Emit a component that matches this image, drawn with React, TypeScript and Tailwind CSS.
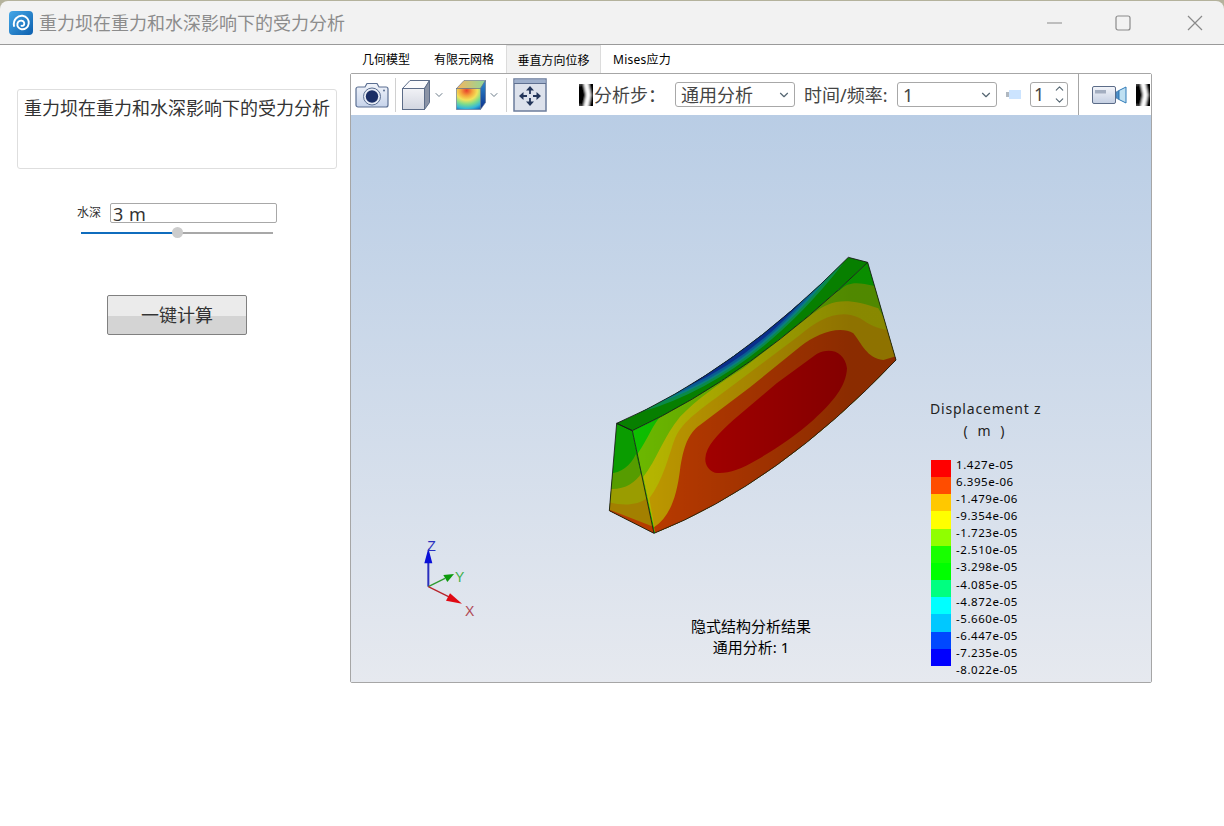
import { ChevronDown, ChevronUp } from "lucide-react";

const legendColors = [
  "bg-[#ff0000]",
  "bg-[#ff4d00]",
  "bg-[#ffc800]",
  "bg-[#ffff00]",
  "bg-[#90ff00]",
  "bg-[#18ff00]",
  "bg-[#00ff00]",
  "bg-[#00ff80]",
  "bg-[#00ffff]",
  "bg-[#00c8ff]",
  "bg-[#0048ff]",
  "bg-[#0000ff]",
];

const legendLabels = [
  "1.427e-05",
  "6.395e-06",
  "-1.479e-06",
  "-9.354e-06",
  "-1.723e-05",
  "-2.510e-05",
  "-3.298e-05",
  "-4.085e-05",
  "-4.872e-05",
  "-5.660e-05",
  "-6.447e-05",
  "-7.235e-05",
  "-8.022e-05",
];

const tabs = ["几何模型", "有限元网格", "垂直方向位移", "Mises应力"];

function Logo() {
  return (
    <svg width="24" height="24" viewBox="0 0 24 24">
      <defs>
        <linearGradient id="logoBg" x1="0" y1="0" x2="1" y2="1">
          <stop offset="0" stopColor="#45a8e8" />
          <stop offset="1" stopColor="#0c5fae" />
        </linearGradient>
      </defs>
      <rect width="24" height="24" rx="4" fill="url(#logoBg)" />
      <path
        d="M5 15C3.800 8.500 9 4.300 13.500 4.800c4.200.5 6.800 4 6.200 7.800-.5 3.600-3.700 6.200-7.200 5.600-2.700-.4-4.600-2.900-4.100-5.400.4-2.100 2.400-3.500 4.400-3.100 1.700.3 2.800 2 2.400 3.500-.3 1.300-1.500 2-2.700 1.600"
        fill="none"
        stroke="#fff"
        strokeWidth="1.900"
        strokeLinecap="round"
      />
    </svg>
  );
}

function CameraIcon() {
  return (
    <svg width="34" height="28" viewBox="0 0 34 28">
      <defs>
        <linearGradient id="camBody" x1="0" y1="0" x2="0" y2="1">
          <stop offset="0" stopColor="#f2f5fb" />
          <stop offset="1" stopColor="#c6d3ea" />
        </linearGradient>
      </defs>
      <path
        d="M3 6h7l2-3.500h10l2 3.500h7c1 0 2 1 2 2v16c0 1-1 2-2 2H3c-1 0-2-1-2-2V8c0-1 1-2 2-2z"
        fill="url(#camBody)"
        stroke="#5b6f92"
        strokeWidth="1.200"
      />
      <circle cx="17" cy="15.500" r="8.500" fill="#e8edf6" stroke="#5b6f92" />
      <circle cx="17" cy="15.500" r="6.200" fill="#1b2f66" />
      <circle cx="29" cy="9.500" r="1" fill="#5b6f92" />
    </svg>
  );
}

function PlainCube() {
  return (
    <svg width="28" height="30" viewBox="0 0 28 30">
      <defs>
        <linearGradient id="cubeFront" x1="0" y1="0" x2="0" y2="1">
          <stop offset="0" stopColor="#f1f2f6" />
          <stop offset="1" stopColor="#d2d6e0" />
        </linearGradient>
      </defs>
      <path d="M.5 8.500L8 .5H27.500L22.500 8.500z" fill="#fbfbfd" stroke="#5c6c88" />
      <path d="M22.500 8.500L27.500 .5V22.500L22.500 29.500z" fill="#8a93a6" stroke="#5c6c88" />
      <rect x=".5" y="8.500" width="22" height="21" fill="url(#cubeFront)" stroke="#5c6c88" />
    </svg>
  );
}

function ColorCube() {
  return (
    <svg width="30" height="30" viewBox="0 0 30 30">
      <defs>
        <radialGradient id="heat" cx="0.42" cy="0.1" r="1">
          <stop offset="0" stopColor="#e8402c" />
          <stop offset="0.25" stopColor="#f5a63c" />
          <stop offset="0.45" stopColor="#f2e25a" />
          <stop offset="0.65" stopColor="#7fdc8a" />
          <stop offset="0.85" stopColor="#35b8d8" />
          <stop offset="1" stopColor="#1a6fc0" />
        </radialGradient>
        <linearGradient id="heatTop" x1="0" y1="0" x2="1" y2="0">
          <stop offset="0" stopColor="#f6b45c" />
          <stop offset="1" stopColor="#8ed89a" />
        </linearGradient>
        <linearGradient id="heatSide" x1="0" y1="0" x2="0" y2="1">
          <stop offset="0" stopColor="#2e8fd0" />
          <stop offset="1" stopColor="#0c2f8c" />
        </linearGradient>
      </defs>
      <path d="M.5 8.500L8 .5H29.500L24.500 8.500z" fill="url(#heatTop)" stroke="#5c6c88" strokeWidth=".6" />
      <path d="M24.500 8.500L29.500 .5V22.500L24.500 29.500z" fill="url(#heatSide)" stroke="#5c6c88" strokeWidth=".6" />
      <rect x=".5" y="8.500" width="24" height="21" fill="url(#heat)" stroke="#5c6c88" strokeWidth=".6" />
    </svg>
  );
}

function FitIcon() {
  return (
    <svg width="34" height="34" viewBox="0 0 34 34">
      <rect x="1" y="1" width="32" height="32" fill="#dde2ec" stroke="#6b7c9c" strokeWidth="1.500" />
      <rect x="1.500" y="1.500" width="31" height="3.500" fill="#9fb0cc" />
      <rect x="1" y="5" width="32" height="1" fill="#5f7090" />
      <path d="M17 12v4M17 24v-4M10 18h4M24 18h-4" stroke="#24365a" strokeWidth="1.800" />
      <path
        d="M17 8l4 4.500h-8zM17 28l4-4.500h-8zM6 18l4.500-4v8zM28 18l-4.500-4v8z"
        fill="#24365a"
      />
    </svg>
  );
}

function VideoIcon() {
  return (
    <svg width="36" height="20" viewBox="0 0 36 20">
      <defs>
        <linearGradient id="vidBody" x1="0" y1="0" x2="0" y2="1">
          <stop offset="0" stopColor="#f3f5fa" />
          <stop offset="1" stopColor="#c4cfe2" />
        </linearGradient>
      </defs>
      <rect x=".5" y="1.500" width="23" height="17" rx="1.500" fill="url(#vidBody)" stroke="#5c6c88" />
      <rect x="3" y="5" width="11" height="3.500" fill="#a3aec0" />
      <path d="M24 7l3-1.500v9L24 13z" fill="#4f91c9" stroke="#3c6ea0" strokeWidth=".6" />
      <path d="M27 5.500l7-3.500v16l-7-3.500z" fill="#bfe0f2" stroke="#2f7bb8" />
    </svg>
  );
}

// broken bitmap arrow, black with a white chevron and soft edges
function GlitchIcon({ id }: { id: string }) {
  return (
    <svg width="14" height="22" viewBox="0 0 14 22">
      <defs>
        <filter id={id} x="-20%" y="-20%" width="140%" height="140%">
          <feGaussianBlur stdDeviation="0.9" />
        </filter>
      </defs>
      <g filter={`url(#${id})`}>
        <rect x="-3" y="-3" width="20" height="28" fill="#000" />
        <path d="M4 -3h5l3 14-3 14H4l3-14z" fill="#fff" />
        <path d="M-3 -3h6v4h-6zM-3 21h6v4h-6z" fill="#555" />
      </g>
    </svg>
  );
}

function DamModel() {
  const front = "M97 542Q456 375 803 37L888 330Q534 702 162 850Z";
  const side = "M50 520L97 542L162 850L28 782Z";
  const top = "M50 520Q405 366 745 22L803 37Q456 375 97 542Z";
  return (
    <svg className="absolute left-[249px] top-[135px]" width="310" height="290" viewBox="0 0 930 870">
      <defs>
        <clipPath id="frontClip">
          <path d={front} />
        </clipPath>
        <clipPath id="sideClip">
          <path d={side} />
        </clipPath>
        <clipPath id="topClip">
          <path d={top} />
        </clipPath>
        <linearGradient id="shade" gradientUnits="userSpaceOnUse" x1="100" y1="0" x2="750" y2="0">
          <stop offset="0" stopColor="#000" stopOpacity="0" />
          <stop offset="1" stopColor="#000" stopOpacity="0.26" />
        </linearGradient>
      </defs>

      {/* front face */}
      <g clipPath="url(#frontClip)">
        <rect width="930" height="870" fill="#0dbf00" />
        <path
          d="M112 612C145 565 160 520 185 495L400 330L720 120C745 95 770 95 825 108L930 340V870H170Z"
          fill="#6cb800"
        />
        <path
          d="M130 680C170 630 190 560 240 500C290 450 350 405 430 355L640 190C690 150 740 140 835 175L930 340V870H170Z"
          fill="#b8b800"
        />
        <path
          d="M148 745C190 690 205 620 225 565C250 510 300 480 400 405L600 255C660 205 720 175 780 205C810 225 830 235 860 240L930 340V870H170Z"
          fill="#c09a00"
        />
        <path
          d="M162 832C210 800 230 740 240 660C250 590 265 550 300 525L450 412L600 290C650 250 720 225 760 250C785 280 800 325 850 330L890 318L930 400V870H170Z"
          fill="#bc3b00"
        />
        <path
          d="M316 625C318 590 350 555 400 510L530 400L650 312C690 290 735 305 741 355C738 410 700 455 640 510C590 555 530 595 470 630C420 660 380 672 345 668C325 660 315 645 316 625Z"
          fill="#b00000"
        />
        <rect width="930" height="870" fill="url(#shade)" />
      </g>

      {/* end face */}
      <g clipPath="url(#sideClip)">
        <rect width="930" height="870" fill="#0a9c00" />
        <path d="M20 670C60 672 90 650 108 612L170 860L20 800Z" fill="#569c00" />
        <path d="M20 716C70 722 105 700 125 668L170 860L20 800Z" fill="#9a9c00" />
        <path d="M20 755C70 770 115 765 140 745L170 860L20 800Z" fill="#a38000" />
        <path d="M20 776L165 832V860L20 800Z" fill="#b53b00" />
      </g>

      {/* top face, colour bands follow the outer edge */}
      <g clipPath="url(#topClip)">
        <rect width="930" height="870" fill="#077f00" />
        <path d="M121 487Q458 389 730 40Z" fill="#0a8a48" />
        <path d="M177 458Q462 361 690 76Z" fill="#0a7d80" />
        <path d="M219 436Q455 343 650 115Z" fill="#0a5c92" />
        <path d="M262 410Q449 327 608 152Z" fill="#0a2f8c" />
      </g>

      <g fill="none" stroke="#151515" strokeWidth="2.500" strokeLinejoin="round">
        <path d={top} />
        <path d={side} />
        <path d="M803 37L888 330Q534 702 162 850" />
      </g>
    </svg>
  );
}

function Axes() {
  return (
    <svg className="absolute left-[49px] top-[415px]" width="100" height="90" viewBox="0 0 300 270">
      <path d="M85 170V90" stroke="#2a2fbe" strokeWidth="6" />
      <path d="M85 55L97 100H73z" fill="#0a10d8" />
      <path d="M85 170L135 145" stroke="#2f9a2f" strokeWidth="4" />
      <path d="M162 132L130 135L142 156z" fill="#0c9a0c" />
      <path d="M85 170L150 202" stroke="#b8242c" strokeWidth="4" />
      <path d="M186 221L150 190L138 212z" fill="#e00a14" />
      <text x="82" y="63" fontSize="42" fill="#2a2fbe" fontFamily="Liberation Sans, sans-serif">Z</text>
      <text x="165" y="157" fontSize="42" fill="#3cb04a" fontFamily="Liberation Sans, sans-serif">Y</text>
      <text x="195" y="257" fontSize="42" fill="#b04a55" fontFamily="Liberation Sans, sans-serif">X</text>
    </svg>
  );
}

export default function App() {
  return (
    <div className="flex min-h-screen flex-col bg-white font-['Noto_Sans','Noto_Sans_CJK_SC',sans-serif] text-[#333]">
      <div className="bg-[#b4b29c] pt-px">
        <div className="flex h-[44px] items-center rounded-t-[8px] border-b border-[#9a9a9a] bg-[#f2f2f2] pl-[9px]">
          <Logo />
          <span className="ml-[6px] text-[18px] leading-none text-[#8c8c8c]">重力坝在重力和水深影响下的受力分析</span>
          <div className="ml-auto flex items-center">
            <svg width="16" height="16" viewBox="0 0 16 16" className="mr-[52px]">
              <path d="M0 8h15" stroke="#8a8a8a" strokeWidth="1" />
            </svg>
            <svg width="16" height="16" viewBox="0 0 16 16" className="mr-[56px]">
              <rect x="1" y="1" width="14" height="14" rx="2" fill="none" stroke="#8a8a8a" strokeWidth="1.200" />
            </svg>
            <svg width="16" height="16" viewBox="0 0 16 16" className="mr-[21px]">
              <path d="M1 1l14 14M15 1L1 15" stroke="#8a8a8a" strokeWidth="1.200" />
            </svg>
          </div>
        </div>
      </div>

      <div className="flex">
        <div className="w-[350px] shrink-0 pl-[17px]">
          <div className="mt-[44px] h-[80px] w-[320px] rounded-[3px] border border-[#dedede] px-[6px] pt-[4px] text-[18px] leading-[28px]">
            重力坝在重力和水深影响下的受力分析
          </div>
          <div className="mt-[34px] flex h-[20px] items-center pl-[60px]">
            <span className="w-[33px] text-[12px]">水深</span>
            <div className="flex h-[20px] w-[167px] items-center rounded-[2px] border border-[#a8a8a8] pl-[2px] pt-px text-[18px] leading-none tracking-[0.5px]">
              3 m
            </div>
          </div>
          <div className="relative mt-[9px] ml-[64px] flex h-[2px] w-[192px]">
            <div className="w-[96px] bg-[#0f6cbd]" />
            <div className="flex-1 bg-[#a8a8a8]" />
            <div className="absolute left-[91px] top-[-5px] h-[11px] w-[11px] rounded-full bg-[#cccccc]" />
          </div>
          <div className="ml-[90px] mt-[61px] flex h-[40px] w-[140px] items-center justify-center rounded-[2px] border border-[#808080] bg-[linear-gradient(#ebebeb_52%,#d4d4d4_52%)] text-[18px]">
            一键计算
          </div>
        </div>

        <div className="w-[802px]">
          <div className="flex h-[28px]">
            {tabs.map((t, i) => (
              <div
                key={t}
                className={
                  i === 2
                    ? "flex w-[95px] items-center justify-center border border-b-0 border-[#dcdcdc] bg-[#f2f2f2] pt-[2px] text-[12px] text-black"
                    : i === 3
                      ? "flex items-center px-3 pt-[2px] text-[12px] tracking-[0.25px] text-black"
                      : "flex items-center px-3 pt-[2px] text-[12px] text-black"
                }
              >
                {t}
              </div>
            ))}
          </div>

          <div className="h-[610px] rounded-[2px] border border-[#a6a6a6]">
            <div className="flex h-[41px] items-center bg-white text-[#444]">
              <div className="ml-[4px]">
                <CameraIcon />
              </div>
              <div className="ml-[6px] h-[34px] w-px bg-[#d0d0d0]" />
              <div className="ml-[6px]">
                <PlainCube />
              </div>
              <ChevronDown size={12} className="ml-[3px] text-[#6a7a88]" />
              <div className="ml-[11px]">
                <ColorCube />
              </div>
              <ChevronDown size={12} className="ml-[2px] text-[#6a7a88]" />
              <div className="ml-[6px] h-[34px] w-px bg-[#d0d0d0]" />
              <div className="ml-[6px]">
                <FitIcon />
              </div>
              <div className="ml-[32px]">
                <GlitchIcon id="softA" />
              </div>
              <span className="ml-px w-[81px] pt-px text-[18px]">分析步：</span>
              <div className="flex h-[25px] w-[120px] items-center justify-between rounded-[3px] border border-[#a8a8a8] pl-[5px] pr-[3px] pt-px text-[18px]">
                通用分析
                <ChevronDown size={14} className="text-[#556672]" />
              </div>
              <span className="ml-[9px] w-[93px] whitespace-nowrap pt-px text-[18px]">时间/频率:</span>
              <div className="flex h-[25px] w-[100px] items-center justify-between rounded-[3px] border border-[#a8a8a8] pl-[5px] pr-[3px] pt-px text-[18px]">
                1
                <ChevronDown size={14} className="text-[#556672]" />
              </div>
              <div className="ml-[9px] flex h-[9px] items-center">
                <div className="h-[5px] w-[3px] bg-[#b0b8c0]" />
                <div className="h-[9px] w-[12px] bg-[#cce4ff]" />
              </div>
              <div className="ml-[9px] flex h-[25px] w-[38px] items-center justify-between rounded-[3px] border border-[#a8a8a8] pl-[3px] pr-[1px] text-[18px]">
                1
                <div className="flex flex-col text-[#556672]">
                  <ChevronUp size={13} className="-mb-px" />
                  <ChevronDown size={13} />
                </div>
              </div>
              <div className="ml-[10px] h-[42px] w-px bg-[#a6a6a6]" />
              <div className="ml-[13px]">
                <VideoIcon />
              </div>
              <div className="ml-[8px]">
                <GlitchIcon id="softB" />
              </div>
            </div>

            <div className="relative h-[567px] overflow-hidden bg-linear-to-b from-[#b9cde5] to-[#e6e9ef]">
              <DamModel />
              <Axes />
              <div className="absolute left-[340px] top-[501px] w-[120px] text-center text-[15px] leading-[21px] text-black">
                <div className="whitespace-nowrap">隐式结构分析结果</div>
                <div className="whitespace-nowrap">通用分析: 1</div>
              </div>
              <div className="absolute left-[579px] top-[283px] w-[111px] text-center text-[14px] leading-[22px] tracking-[0.8px] text-[#222]">
                <div className="whitespace-nowrap">Displacement z</div>
                <div className="tracking-[3px]">( m )</div>
              </div>
              <div className="absolute left-[580px] top-[345px] flex">
                <div className="flex w-[20px] flex-col">
                  {legendColors.map((c) => (
                    <div key={c} className={`h-[17.17px] ${c}`} />
                  ))}
                </div>
                <div className="ml-[5px] -mt-[4px] flex flex-col">
                  {legendLabels.map((l) => (
                    <div key={l} className="h-[17.08px] text-[11.5px] leading-[17px] tracking-[0.55px] text-black">
                      {l}
                    </div>
                  ))}
                </div>
              </div>
            </div>
          </div>
        </div>
      </div>
    </div>
  );
}
